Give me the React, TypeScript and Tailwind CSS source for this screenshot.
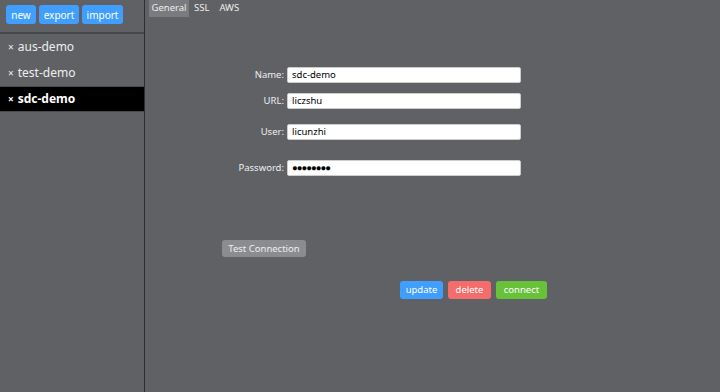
import React from "react";

const font = { fontFamily: '"Noto Sans", "Open Sans", sans-serif' };

export default function App() {
  const items = [
    { name: "aus-demo", active: false },
    { name: "test-demo", active: false },
    { name: "sdc-demo", active: true },
  ];
  return (
    <div className="flex w-[720px] h-[392px] bg-[#606165] text-white overflow-hidden" style={font}>
      <div className="w-[145px] flex flex-col border-r border-[#2d2e31]">
        <div className="flex gap-[3px] px-[6px] pt-[5px] h-[34px] border-b-2 border-[#47484c]">
          <button className="h-[19px] w-[30px] rounded-[3px] bg-[#409eff] text-[10px] leading-none text-white">new</button>
          <button className="h-[19px] w-[40px] rounded-[3px] bg-[#409eff] text-[10px] leading-none text-white">export</button>
          <button className="h-[19px] w-[41px] rounded-[3px] bg-[#409eff] text-[10px] leading-none text-white">import</button>
        </div>
        {items.map((it) => (
          <div
            key={it.name}
            className={
              it.active
                ? "h-[26px] flex items-center pl-[8px] bg-black border-y border-[#4a4b4f] text-[12px] font-bold"
                : "h-[26px] flex items-center pl-[8px] text-[12px] text-[#eeeeee]"
            }
          >
            <span className="text-[10px] mr-[4px]">×</span>
            {it.name}
          </div>
        ))}
      </div>
      <div className="flex-1 flex flex-col">
        <div className="flex items-start pl-[4px] gap-[3px] text-[9.5px]">
          <div className="h-[17px] w-[40px] flex items-center justify-center bg-[#7a7b7f] text-[#eeeeee]">General</div>
          <div className="h-[17px] px-[2px] flex items-center text-[#eeeeee]">SSL</div>
          <div className="h-[17px] px-[5px] flex items-center text-[#eeeeee]">AWS</div>
        </div>
        <div className="flex flex-col pt-[50px] text-[9.5px]">
          <div className="flex items-center h-[16px]">
            <span className="w-[142px] text-right pr-[3px] text-[#eeeeee]">Name:</span>
            <div className="w-[234px] h-[16px] bg-white rounded-[2px] border border-[#cccccc] text-black flex items-center pl-[4px]">sdc-demo</div>
          </div>
          <div className="flex items-center h-[16px] mt-[10px]">
            <span className="w-[142px] text-right pr-[3px] text-[#eeeeee]">URL:</span>
            <div className="w-[234px] h-[16px] bg-white rounded-[2px] border border-[#cccccc] text-black flex items-center pl-[4px]">liczshu</div>
          </div>
          <div className="flex items-center h-[16px] mt-[15px]">
            <span className="w-[142px] text-right pr-[3px] text-[#eeeeee]">User:</span>
            <div className="w-[234px] h-[16px] bg-white rounded-[2px] border border-[#cccccc] text-black flex items-center pl-[4px]">licunzhi</div>
          </div>
          <div className="flex items-center h-[16px] mt-[20px]">
            <span className="w-[142px] text-right pr-[3px] text-[#eeeeee]">Password:</span>
            <div className="w-[234px] h-[16px] bg-white rounded-[2px] border border-[#cccccc] text-black flex items-center pl-[4px] text-[9.5px] tracking-[-1px]">●●●●●●●●</div>
          </div>
          <div className="pl-[77px] mt-[64px]">
            <button className="h-[17px] w-[84px] rounded-[3px] bg-[#8b8c90] text-[9.5px] text-[#eeeeee] leading-none">Test Connection</button>
          </div>
          <div className="flex gap-[5px] pl-[255px] mt-[24px]">
            <button className="h-[18px] w-[43px] rounded-[3px] bg-[#409eff] text-[9.5px] text-white leading-none">update</button>
            <button className="h-[18px] w-[43px] rounded-[3px] bg-[#f56c6c] text-[9.5px] text-white leading-none">delete</button>
            <button className="h-[18px] w-[51px] rounded-[3px] bg-[#67c23a] text-[9.5px] text-white leading-none">connect</button>
          </div>
        </div>
      </div>
    </div>
  );
}
